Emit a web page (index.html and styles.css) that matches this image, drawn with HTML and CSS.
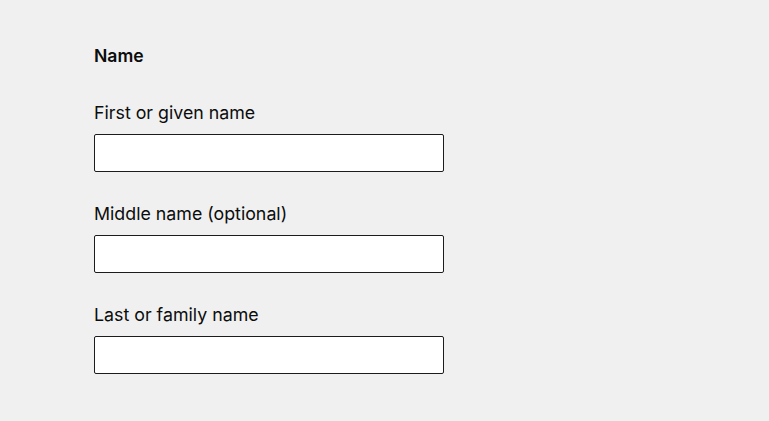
FILE: index.html
```html
<!DOCTYPE html>
<html lang="en">
<head>
<meta charset="utf-8">
<title>Name</title>
<link rel="stylesheet" href="styles.css">
</head>
<body>
<form class="form">
  <fieldset class="fieldset">
    <legend class="legend">Name</legend>
    <div class="field">
      <label class="label" for="first">First or given name</label>
      <input class="input" id="first" type="text">
    </div>
    <div class="field">
      <label class="label" for="middle">Middle name (optional)</label>
      <input class="input" id="middle" type="text">
    </div>
    <div class="field">
      <label class="label" for="last">Last or family name</label>
      <input class="input" id="last" type="text">
    </div>
  </fieldset>
</form>
</body>
</html>
```
FILE: styles.css
```css
html, body {
  margin: 0;
  padding: 0;
  background: #f0f0f0;
}
body {
  font-family: Inter, "Noto Sans", sans-serif;
  color: #0b0c0c;
}
.form {
  padding: 44px 94px 30px;
}
.fieldset {
  border: 0;
  margin: 0;
  padding: 0;
}
.legend {
  padding: 0 0 33px 0;
  font-size: 17.6px;
  font-weight: 600;
  line-height: 24px;
}
.field {
  display: flex;
  flex-direction: column;
  align-items: flex-start;
  gap: 9px;
  margin-bottom: 30px;
}
.field:last-child {
  margin-bottom: 0;
}
.label {
  font-size: 17.8px;
  line-height: 24px;
}
.input {
  box-sizing: border-box;
  width: 350px;
  height: 38px;
  margin: 0;
  border: 1px solid #1c1c1c;
  border-radius: 2px;
  background: #fff;
  padding: 0 8px;
  font: inherit;
}
```
